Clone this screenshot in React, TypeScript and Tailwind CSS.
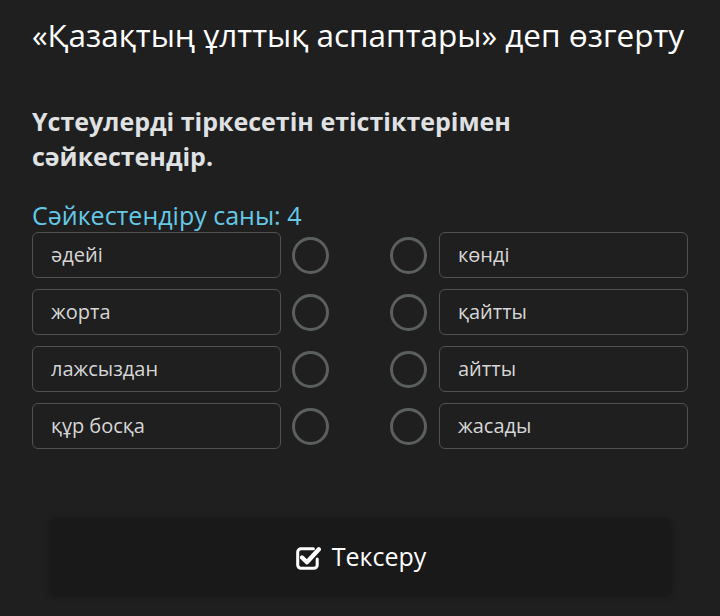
import React from "react";

const left = ["әдейі", "жорта", "лажсыздан", "құр босқа"];
const right = ["көнді", "қайтты", "айтты", "жасады"];

function CheckIcon() {
  return (
    <svg width="26" height="26" viewBox="0 0 24 24" fill="none" className="shrink-0">
      <path
        d="M17 3.5H5.5a3 3 0 0 0-3 3v12a3 3 0 0 0 3 3h12a3 3 0 0 0 3-3V13"
        stroke="white"
        strokeWidth="2.8"
        strokeLinecap="round"
      />
      <path
        d="M6.5 11.5l4.5 4.5L22 4"
        stroke="white"
        strokeWidth="4"
        strokeLinecap="round"
        strokeLinejoin="round"
      />
    </svg>
  );
}

export default function App() {
  return (
    <div
      className="w-[720px] h-[616px] bg-[#1f1f1f] overflow-hidden px-8"
      style={{ fontFamily: '"Open Sans", "Noto Sans", sans-serif' }}
    >
      <h1 className="pt-[14px] text-[31.5px] leading-[42px] text-white font-normal whitespace-nowrap">
        «Қазақтың ұлттық аспаптары» деп өзгерту
      </h1>
      <p className="mt-[48px] text-[25px] leading-[35px] font-bold text-[#dfe1e3] w-[540px]">
        Үстеулерді тіркесетін етістіктерімен сәйкестендір.
      </p>
      <div className="mt-[24px] text-[25px] leading-[34px] text-[#66c8e6]">
        Сәйкестендіру саны: 4
      </div>
      <div className="flex flex-col gap-[11px]">
        {left.map((l, i) => (
          <div key={i} className="flex items-center">
            <div className="w-[249px] h-[46px] rounded-[6px] border border-[#515151] flex items-center pl-[18px] text-[20px] text-[#d6d6d6]">
              {l}
            </div>
            <div className="ml-[11px] w-[37px] h-[37px] rounded-full border-[3px] border-[#5b5f5f]" />
            <div className="ml-[61px] w-[37px] h-[37px] rounded-full border-[3px] border-[#5b5f5f]" />
            <div className="ml-[12px] w-[249px] h-[46px] rounded-[6px] border border-[#515151] flex items-center pl-[18px] text-[20px] text-[#d6d6d6]">
              {right[i]}
            </div>
          </div>
        ))}
      </div>
      <div className="mt-[70px] ml-[18px] w-[621px] h-[77px] rounded-[6px] bg-[#191919] shadow-[0_0_6px_rgba(0,0,0,0.35)] flex items-center justify-center gap-[11px]">
        <CheckIcon />
        <span className="text-[25px] text-white leading-none pb-[2px]">Тексеру</span>
      </div>
    </div>
  );
}
